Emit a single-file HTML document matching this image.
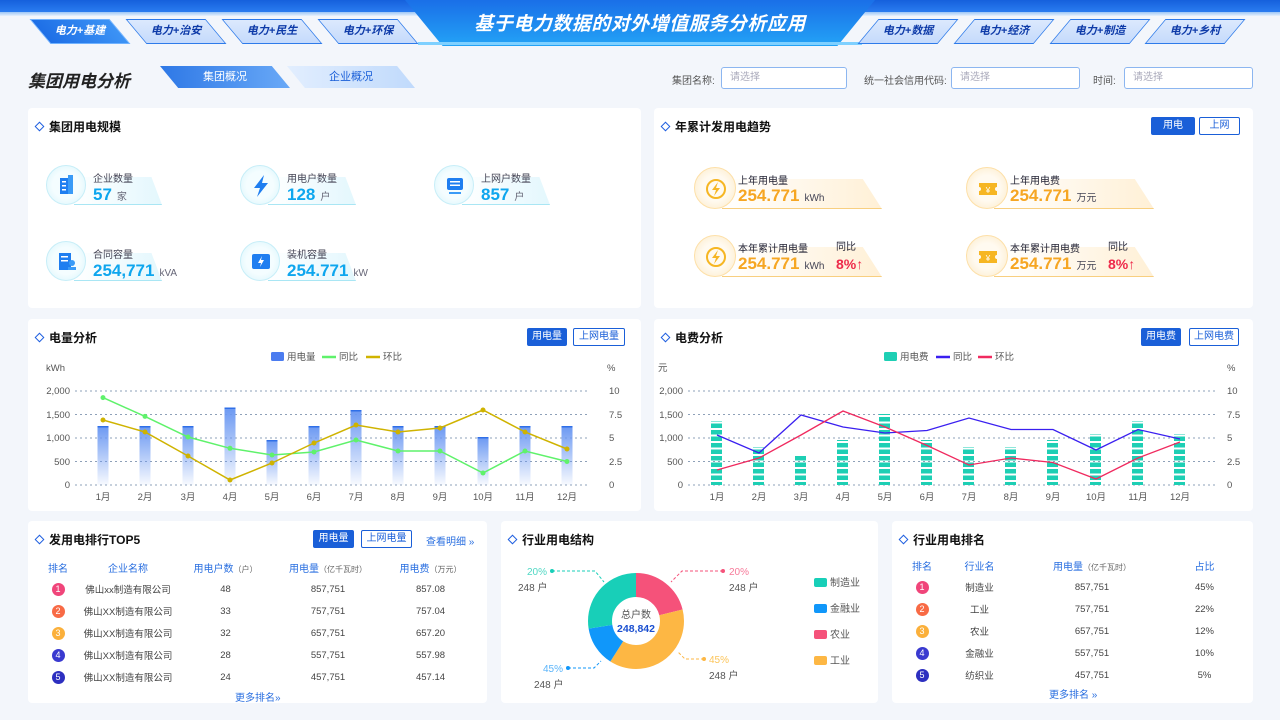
<!DOCTYPE html>
<html><head><meta charset="utf-8"><style>
*{margin:0;padding:0;box-sizing:border-box}
body{width:1280px;height:720px;overflow:hidden;background:#f3f6fb;font-family:"Liberation Sans","Noto Sans CJK SC",sans-serif;position:relative;color:#333}
.a{position:absolute}
.panel{position:absolute;background:#fff;border-radius:4px}
.ph{position:absolute;left:8px;top:10px;font-size:12px;font-weight:bold;color:#111;display:flex;align-items:center;white-space:nowrap}
.ph i{display:inline-block;width:7px;height:7px;border:1.6px solid #1f5fe0;transform:rotate(45deg);margin-right:6px}
.tab{position:absolute;top:19px;height:25px;width:80px;line-height:25px;text-align:center;font-size:11px;font-weight:bold;font-style:italic;color:#0d3aa8}
.tab b{position:absolute;inset:0;transform:skewX(40deg);background:linear-gradient(#dce9fd,#c5dafc);border:1.5px solid #2e7bea;z-index:0}
.tab.rt b{transform:skewX(-40deg)}
.tab span{position:relative}
.tab.on{color:#fff}.tab.on b{background:linear-gradient(90deg,#1e6fe6,#3c93f5);border-color:#6fb2ff}
.btn{position:absolute;height:18px;font-size:10px;line-height:16px;text-align:center;border:1px solid #1a5fd8;border-radius:2px;color:#1a5fd8;background:#fff}
.btn.on{background:#1a5fd8;color:#fff}
.lbl{font-size:11px;color:#555;white-space:nowrap}
.inp{position:absolute;top:67px;height:22px;border:1px solid #8cb6f0;border-radius:3px;font-size:10px;color:#aab;line-height:20px;padding-left:8px;background:#fff}
.st,.so{width:200px;height:44px;white-space:nowrap}
.st .c{position:absolute;left:0;top:0;width:40px;height:40px;border-radius:50%;background:radial-gradient(#f4fdff 50%,#d6f4fb);border:1px solid #c7eef8}
.st .r{position:absolute;left:28px;top:12px;width:88px;height:28px;background:linear-gradient(90deg,rgba(210,244,252,0) ,#e3f7fd);clip-path:polygon(0 0,88% 0,100% 100%,0 100%);border-bottom:1px solid #a9e6f4}
.st .t{position:absolute;left:47px;top:5px;font-size:10px;color:#445}
.st .v{position:absolute;left:47px;top:20px;font-size:17px;font-weight:bold;color:#0ea6ee}
.st .v small{font-size:10px;color:#667;font-weight:normal;margin-left:5px}
.so .c{position:absolute;left:0;top:0;width:42px;height:42px;border-radius:50%;background:radial-gradient(#fffaf0 45%,#fde9c4);border:1px solid #fde0a8}
.so .r{position:absolute;left:28px;top:12px;width:160px;height:30px;background:linear-gradient(90deg,rgba(255,244,224,0),#fff0d6);clip-path:polygon(0 0,88% 0,100% 100%,0 100%);border-bottom:1px solid #f8cf80}
.so .t{position:absolute;left:44px;top:5px;font-size:10px;color:#223}
.so .v{position:absolute;left:44px;top:19px;font-size:17px;font-weight:bold;color:#f6a623}
.so .v small{font-size:10px;color:#445;font-weight:normal;margin-left:5px}
.so .p{position:absolute;left:142px;font-size:10px;color:#223}
.so .pv{position:absolute;left:116px;top:21px;font-size:14px;font-weight:bold;color:#ee2a4a}
table{position:absolute;border-collapse:collapse;font-size:9.5px;color:#444}
td,th{text-align:center;height:22px;font-weight:normal;white-space:nowrap}
th{color:#2a6fe0;font-size:10px}
th small{color:#666;font-size:8px}
.n{display:inline-block;width:13px;height:13px;border-radius:50%;color:#fff;font-size:9px;line-height:13px}
</style></head><body>
<!-- header -->
<div class="a" style="left:0;top:0;width:1280px;height:12px;background:linear-gradient(#1560dc,#2a7cf0)"></div>
<div class="a" style="left:0;top:12px;width:1280px;height:4px;background:linear-gradient(#9cc6f6,#e8f1fd)"></div>
<div class="a" style="left:405px;top:0;width:470px;height:46px;background:linear-gradient(#1a6fe8,#23a3f6);clip-path:polygon(0 0,100% 0,92% 100%,8% 100%)"></div>
<div class="a" style="left:418px;top:42px;width:444px;height:3px;background:#7ed0ff"></div>
<div class="a" style="left:405px;top:9px;width:470px;text-align:center;font-size:19px;font-weight:bold;font-style:italic;color:#fff;letter-spacing:0.5px">基于电力数据的对外增值服务分析应用</div>
<div class="tab on" style="left:40px"><b></b><span>电力+基建</span></div>
<div class="tab" style="left:136px"><b></b><span>电力+治安</span></div>
<div class="tab" style="left:232px"><b></b><span>电力+民生</span></div>
<div class="tab" style="left:328px"><b></b><span>电力+环保</span></div>
<div class="tab rt" style="left:868px"><b></b><span>电力+数据</span></div>
<div class="tab rt" style="left:964px"><b></b><span>电力+经济</span></div>
<div class="tab rt" style="left:1060px"><b></b><span>电力+制造</span></div>
<div class="tab rt" style="left:1155px"><b></b><span>电力+乡村</span></div>
<!-- title row -->
<div class="a" style="left:28px;top:67px;font-size:17px;font-weight:bold;font-style:italic;color:#222">集团用电分析</div>
<div class="a" style="left:160px;top:66px;width:130px;height:22px;background:linear-gradient(90deg,#2e78e6,#69a9f7);clip-path:polygon(0 0,86% 0,100% 100%,14% 100%);color:#fff;font-size:11px;text-align:center;line-height:22px">集团概况</div>
<div class="a" style="left:287px;top:66px;width:128px;height:22px;background:linear-gradient(90deg,#e2eefe,#c0dafc);clip-path:polygon(0 0,86% 0,100% 100%,14% 100%);color:#1a5fd8;font-size:11px;text-align:center;line-height:22px">企业概况</div>
<div class="a lbl" style="left:672px;top:72px;font-size:10px">集团名称:</div><div class="inp" style="left:721px;width:126px">请选择</div>
<div class="a lbl" style="left:864px;top:72px;font-size:10px">统一社会信用代码:</div><div class="inp" style="left:951px;width:129px">请选择</div>
<div class="a lbl" style="left:1093px;top:72px;font-size:10px">时间:</div><div class="inp" style="left:1124px;width:129px">请选择</div>

<!-- panel 1 -->
<div class="panel" style="left:28px;top:108px;width:613px;height:200px">
<div class="ph"><i></i>集团用电规模</div>
<div class="a st" style="left:18px;top:57px"><div class="r"></div><div class="c"><svg width="40" height="40"><rect x="13" y="12" width="8" height="16" fill="#1f7ef0"/><rect x="21" y="9" width="5" height="19" fill="#3a9bf7"/><rect x="15" y="15" width="4" height="1.5" fill="#fff"/><rect x="15" y="19" width="4" height="1.5" fill="#fff"/><rect x="15" y="23" width="4" height="1.5" fill="#fff"/></svg></div><div class="t">企业数量</div><div class="v">57<small>家</small></div></div>
<div class="a st" style="left:212px;top:57px"><div class="r"></div><div class="c"><svg width="40" height="40"><path d="M23 9 L13 22 H19 L16 31 L27 17 H21 Z" fill="#1f7ef0"/></svg></div><div class="t">用电户数量</div><div class="v">128<small>户</small></div></div>
<div class="a st" style="left:406px;top:57px"><div class="r"></div><div class="c"><svg width="40" height="40"><rect x="12" y="12" width="16" height="12" rx="2" fill="#1f7ef0"/><rect x="15" y="15" width="10" height="1.5" fill="#fff"/><rect x="15" y="18.5" width="10" height="1.5" fill="#fff"/><rect x="14" y="26" width="12" height="2" fill="#3a9bf7"/></svg></div><div class="t">上网户数量</div><div class="v">857<small>户</small></div></div>
<div class="a st" style="left:18px;top:133px"><div class="r"></div><div class="c"><svg width="40" height="40"><rect x="12" y="11" width="12" height="17" fill="#1f7ef0"/><rect x="14" y="14" width="7" height="1.5" fill="#fff"/><rect x="14" y="18" width="7" height="1.5" fill="#fff"/><circle cx="25" cy="21" r="3" fill="#3a9bf7"/><rect x="21" y="25" width="8" height="3" fill="#3a9bf7"/></svg></div><div class="t">合同容量</div><div class="v">254,771<small>kVA</small></div></div>
<div class="a st" style="left:212px;top:133px"><div class="r"></div><div class="c"><svg width="40" height="40"><rect x="11" y="12" width="18" height="15" rx="2" fill="#1f7ef0"/><path d="M21 14 L17 21 H20 L19 25 L23 18 H20 Z" fill="#fff"/></svg></div><div class="t">装机容量</div><div class="v">254.771<small>kW</small></div></div>
</div>

<!-- panel 2 -->
<div class="panel" style="left:654px;top:108px;width:599px;height:200px">
<div class="ph"><i></i>年累计发用电趋势</div>
<div class="btn on" style="left:497px;top:9px;width:44px">用电</div><div class="btn" style="left:545px;top:9px;width:41px">上网</div>
<div class="a so" style="left:40px;top:59px"><div class="r"></div><div class="c"><svg width="42" height="42"><circle cx="21" cy="21" r="9" fill="none" stroke="#f6b623" stroke-width="2"/><path d="M23 14 L17 22 H21 L19 28 L25 20 H21 Z" fill="#f6b623"/></svg></div><div class="t">上年用电量</div><div class="v">254.771<small>kWh</small></div></div>
<div class="a so" style="left:312px;top:59px"><div class="r"></div><div class="c"><svg width="42" height="42"><path d="M12 15 H30 V19 A2 2 0 0 0 30 23 V27 H12 V23 A2 2 0 0 0 12 19 Z" fill="#f6b623"/><text x="21" y="25" font-size="8" fill="#fff" text-anchor="middle">¥</text></svg></div><div class="t">上年用电费</div><div class="v">254.771<small>万元</small></div></div>
<div class="a so" style="left:40px;top:127px"><div class="r"></div><div class="c"><svg width="42" height="42"><circle cx="21" cy="21" r="9" fill="none" stroke="#f6b623" stroke-width="2"/><path d="M23 14 L17 22 H21 L19 28 L25 20 H21 Z" fill="#f6b623"/></svg></div><div class="t">本年累计用电量</div><div class="v">254.771<small>kWh</small></div><div class="p" style="top:3px">同比</div><div class="pv" style="left:142px">8%↑</div></div>
<div class="a so" style="left:312px;top:127px"><div class="r"></div><div class="c"><svg width="42" height="42"><path d="M12 15 H30 V19 A2 2 0 0 0 30 23 V27 H12 V23 A2 2 0 0 0 12 19 Z" fill="#f6b623"/><text x="21" y="25" font-size="8" fill="#fff" text-anchor="middle">¥</text></svg></div><div class="t">本年累计用电费</div><div class="v">254.771<small>万元</small></div><div class="p" style="top:3px">同比</div><div class="pv" style="left:142px">8%↑</div></div>
</div>

<!-- panel 3 -->
<div class="panel" style="left:28px;top:319px;width:613px;height:192px">
<div class="ph"><i></i>电量分析</div>
<div class="btn on" style="left:499px;top:9px;width:40px">用电量</div><div class="btn" style="left:545px;top:9px;width:52px">上网电量</div>
</div>
<svg class="a" style="left:0;top:0" width="1280" height="720" font-family="Liberation Sans,Noto Sans CJK SC,sans-serif" font-size="9.5" fill="#555">
<defs>
<linearGradient id="bg1" x1="0" y1="0" x2="0" y2="1"><stop offset="0" stop-color="#6b98f2"/><stop offset="1" stop-color="#6b98f2" stop-opacity="0.05"/></linearGradient>
<pattern id="st" width="12" height="6.5" patternUnits="userSpaceOnUse" y="1"><rect width="12" height="4.5" fill="#1ecfb4"/></pattern>
</defs>
<rect x="271" y="352" width="13" height="9" rx="1.5" fill="#4b7cf0"/><text x="287" y="360">用电量</text>
<line x1="322" y1="357" x2="336" y2="357" stroke="#5ff26b" stroke-width="2.5"/><text x="339" y="360">同比</text>
<line x1="366" y1="357" x2="380" y2="357" stroke="#d0b400" stroke-width="2.5"/><text x="383" y="360">环比</text>
<text x="46" y="371">kWh</text><text x="607" y="371">%</text>
<g stroke="#8ea0b8" stroke-dasharray="2 3" stroke-width="1"><line x1="75" y1="391" x2="590" y2="391"/><line x1="75" y1="414.5" x2="590" y2="414.5"/><line x1="75" y1="438" x2="590" y2="438"/><line x1="75" y1="461.5" x2="590" y2="461.5"/><line x1="75" y1="485" x2="590" y2="485"/></g>
<g text-anchor="end"><text x="70" y="394">2,000</text><text x="70" y="418">1,500</text><text x="70" y="441">1,000</text><text x="70" y="465">500</text><text x="70" y="488">0</text></g>
<g><text x="609" y="394">10</text><text x="609" y="418">7.5</text><text x="609" y="441">5</text><text x="609" y="465">2.5</text><text x="609" y="488">0</text></g>
<g fill="url(#bg1)"><rect x="97.5" y="426" width="11" height="59"/><rect x="139.5" y="426" width="11" height="59"/><rect x="182.5" y="426" width="11" height="59"/><rect x="224.5" y="407.5" width="11" height="77.5"/><rect x="266.5" y="440" width="11" height="45"/><rect x="308.5" y="426" width="11" height="59"/><rect x="350.5" y="410" width="11" height="75"/><rect x="392.5" y="426" width="11" height="59"/><rect x="434.5" y="426" width="11" height="59"/><rect x="477.5" y="437" width="11" height="48"/><rect x="519.5" y="426" width="11" height="59"/><rect x="561.5" y="426" width="11" height="59"/></g>
<g fill="#2f6fe8"><rect x="97.5" y="426" width="11" height="1.5"/><rect x="139.5" y="426" width="11" height="1.5"/><rect x="182.5" y="426" width="11" height="1.5"/><rect x="224.5" y="407.5" width="11" height="1.5"/><rect x="266.5" y="440" width="11" height="1.5"/><rect x="308.5" y="426" width="11" height="1.5"/><rect x="350.5" y="410" width="11" height="1.5"/><rect x="392.5" y="426" width="11" height="1.5"/><rect x="434.5" y="426" width="11" height="1.5"/><rect x="477.5" y="437" width="11" height="1.5"/><rect x="519.5" y="426" width="11" height="1.5"/><rect x="561.5" y="426" width="11" height="1.5"/></g>
<polyline fill="none" stroke="#5ff26b" stroke-width="1.5" points="103,397.6 145,416.4 188,437 230,448.3 272,455 314,452 356,440 398,451 440,451 483,473 525,451 567,461.5"/>
<g fill="#5ff26b"><circle cx="103" cy="397.6" r="2.5"/><circle cx="145" cy="416.4" r="2.5"/><circle cx="188" cy="437" r="2.5"/><circle cx="230" cy="448.3" r="2.5"/><circle cx="272" cy="455" r="2.5"/><circle cx="314" cy="452" r="2.5"/><circle cx="356" cy="440" r="2.5"/><circle cx="398" cy="451" r="2.5"/><circle cx="440" cy="451" r="2.5"/><circle cx="483" cy="473" r="2.5"/><circle cx="525" cy="451" r="2.5"/><circle cx="567" cy="461.5" r="2.5"/></g>
<polyline fill="none" stroke="#cfb300" stroke-width="1.5" points="103,420 145,432 188,456 230,480 272,463 314,443 356,425 398,432 440,428 483,410 525,432 567,449"/>
<g fill="#cfb300"><circle cx="103" cy="420" r="2.5"/><circle cx="145" cy="432" r="2.5"/><circle cx="188" cy="456" r="2.5"/><circle cx="230" cy="480" r="2.5"/><circle cx="272" cy="463" r="2.5"/><circle cx="314" cy="443" r="2.5"/><circle cx="356" cy="425" r="2.5"/><circle cx="398" cy="432" r="2.5"/><circle cx="440" cy="428" r="2.5"/><circle cx="483" cy="410" r="2.5"/><circle cx="525" cy="432" r="2.5"/><circle cx="567" cy="449" r="2.5"/></g>
<g text-anchor="middle"><text x="103" y="500">1月</text><text x="145" y="500">2月</text><text x="188" y="500">3月</text><text x="230" y="500">4月</text><text x="272" y="500">5月</text><text x="314" y="500">6月</text><text x="356" y="500">7月</text><text x="398" y="500">8月</text><text x="440" y="500">9月</text><text x="483" y="500">10月</text><text x="525" y="500">11月</text><text x="567" y="500">12月</text></g>
</svg>

<!-- panel 4 -->
<div class="panel" style="left:654px;top:319px;width:599px;height:192px">
<div class="ph"><i></i>电费分析</div>
<div class="btn on" style="left:487px;top:9px;width:40px">用电费</div><div class="btn" style="left:535px;top:9px;width:50px">上网电费</div>
</div>
<svg class="a" style="left:0;top:0" width="1280" height="720" font-family="Liberation Sans,Noto Sans CJK SC,sans-serif" font-size="9.5" fill="#555">
<rect x="884" y="352" width="13" height="9" rx="1.5" fill="#1ecfb4"/><text x="900" y="360">用电费</text>
<line x1="936" y1="357" x2="950" y2="357" stroke="#3a1ff0" stroke-width="2.5"/><text x="953" y="360">同比</text>
<line x1="978" y1="357" x2="992" y2="357" stroke="#f02a5f" stroke-width="2.5"/><text x="995" y="360">环比</text>
<text x="658" y="371">元</text><text x="1227" y="371">%</text>
<g stroke="#8ea0b8" stroke-dasharray="2 3" stroke-width="1"><line x1="688" y1="391" x2="1215" y2="391"/><line x1="688" y1="414.5" x2="1215" y2="414.5"/><line x1="688" y1="438" x2="1215" y2="438"/><line x1="688" y1="461.5" x2="1215" y2="461.5"/><line x1="688" y1="485" x2="1215" y2="485"/></g>
<g text-anchor="end"><text x="683" y="394">2,000</text><text x="683" y="418">1,500</text><text x="683" y="441">1,000</text><text x="683" y="465">500</text><text x="683" y="488">0</text></g>
<g><text x="1227" y="394">10</text><text x="1227" y="418">7.5</text><text x="1227" y="441">5</text><text x="1227" y="465">2.5</text><text x="1227" y="488">0</text></g>
<g fill="url(#st)"><rect x="711" y="421" width="11" height="64"/><rect x="753" y="447" width="11" height="38"/><rect x="795" y="454" width="11" height="31"/><rect x="837" y="440" width="11" height="45"/><rect x="879" y="414" width="11" height="71"/><rect x="921" y="440" width="11" height="45"/><rect x="963" y="447" width="11" height="38"/><rect x="1005" y="447" width="11" height="38"/><rect x="1047" y="440" width="11" height="45"/><rect x="1090" y="434" width="11" height="51"/><rect x="1132" y="421" width="11" height="64"/><rect x="1174" y="434" width="11" height="51"/></g>
<polyline fill="none" stroke="#3a1ff0" stroke-width="1.3" points="717,435 759,453 801,415 843,427 885,433 927,430.5 969,418 1011,429.5 1053,429.5 1096,450 1138,429.5 1180,439"/>
<polyline fill="none" stroke="#f02a5f" stroke-width="1.3" points="717,470 759,458 801,435 843,411 885,427 927,445.5 969,465 1011,458 1053,462.5 1096,479 1138,458 1180,442"/>
<g text-anchor="middle"><text x="717" y="500">1月</text><text x="759" y="500">2月</text><text x="801" y="500">3月</text><text x="843" y="500">4月</text><text x="885" y="500">5月</text><text x="927" y="500">6月</text><text x="969" y="500">7月</text><text x="1011" y="500">8月</text><text x="1053" y="500">9月</text><text x="1096" y="500">10月</text><text x="1138" y="500">11月</text><text x="1180" y="500">12月</text></g>
</svg>

<!-- bottom 1 -->
<div class="panel" style="left:28px;top:521px;width:459px;height:182px">
<div class="ph"><i></i>发用电排行TOP5</div>
<div class="btn on" style="left:285px;top:9px;width:41px">用电量</div><div class="btn" style="left:333px;top:9px;width:51px">上网电量</div>
<div class="a" style="left:398px;top:12px;font-size:10px;color:#2a6fe0">查看明细 »</div>
<table style="left:10px;top:35px;width:440px">
<tr><th style="width:40px">排名</th><th style="width:100px">企业名称</th><th style="width:95px">用电户数<small>（户）</small></th><th style="width:110px">用电量<small>（亿千瓦时）</small></th><th>用电费<small>（万元）</small></th></tr>
<tr><td><span class="n" style="background:#f0457a">1</span></td><td>佛山xx制造有限公司</td><td>48</td><td>857,751</td><td>857.08</td></tr>
<tr><td><span class="n" style="background:#f86a45">2</span></td><td>佛山XX制造有限公司</td><td>33</td><td>757,751</td><td>757.04</td></tr>
<tr><td><span class="n" style="background:#fbb03b">3</span></td><td>佛山XX制造有限公司</td><td>32</td><td>657,751</td><td>657.20</td></tr>
<tr><td><span class="n" style="background:#3a3ad0">4</span></td><td>佛山XX制造有限公司</td><td>28</td><td>557,751</td><td>557.98</td></tr>
<tr><td><span class="n" style="background:#2d2fc0">5</span></td><td>佛山XX制造有限公司</td><td>24</td><td>457,751</td><td>457.14</td></tr>
</table>
<div class="a" style="left:207px;top:168px;font-size:10px;color:#2a6fe0">更多排名»</div>
</div>

<!-- bottom 2 -->
<div class="panel" style="left:501px;top:521px;width:377px;height:182px">
<div class="ph"><i></i>行业用电结构</div>
</div>
<svg class="a" style="left:0;top:0" width="1280" height="720" font-family="Liberation Sans,Noto Sans CJK SC,sans-serif" font-size="10" fill="#555">
<g transform="translate(636,621) rotate(-90)" fill="none" stroke-width="24">
<circle r="36" stroke="#f5527a" stroke-dasharray="47.7 300"/>
<circle r="36" stroke="#fdb744" stroke-dasharray="0 47.7 85.5 300"/>
<circle r="36" stroke="#1097fa" stroke-dasharray="0 133.2 30.4 300"/>
<circle r="36" stroke="#18cfb8" stroke-dasharray="0 163.6 62.6 300"/>
</g>
<text x="636" y="618" text-anchor="middle" fill="#555">总户数</text>
<text x="636" y="632" text-anchor="middle" fill="#1a4fd0" font-weight="bold" font-size="10.5">248,842</text>
<polyline points="552,571 595,571 604,582" fill="none" stroke="#18cfb8" stroke-dasharray="3 2"/><circle cx="552" cy="571" r="2" fill="#18cfb8"/>
<text x="527" y="575" fill="#4fd8c4">20%</text><text x="518" y="591">248 户</text>
<polyline points="723,571 682,571 671,582" fill="none" stroke="#f5527a" stroke-dasharray="3 2"/><circle cx="723" cy="571" r="2" fill="#f5527a"/>
<text x="729" y="575" fill="#f77a9a">20%</text><text x="729" y="591">248 户</text>
<polyline points="704,659 685,659 678,652" fill="none" stroke="#fdb744" stroke-dasharray="3 2"/><circle cx="704" cy="659" r="2" fill="#fdb744"/>
<text x="709" y="663" fill="#fcc55a">45%</text><text x="709" y="679">248 户</text>
<polyline points="568,668 594,668 601,661" fill="none" stroke="#1097fa" stroke-dasharray="3 2"/><circle cx="568" cy="668" r="2" fill="#1097fa"/>
<text x="543" y="672" fill="#5ab4fa">45%</text><text x="534" y="688">248 户</text>
<rect x="814" y="578" width="13" height="9" rx="2" fill="#18cfb8"/><text x="830" y="586">制造业</text>
<rect x="814" y="604" width="13" height="9" rx="2" fill="#1097fa"/><text x="830" y="612">金融业</text>
<rect x="814" y="630" width="13" height="9" rx="2" fill="#f5527a"/><text x="830" y="638">农业</text>
<rect x="814" y="656" width="13" height="9" rx="2" fill="#fdb744"/><text x="830" y="664">工业</text>
</svg>

<!-- bottom 3 -->
<div class="panel" style="left:892px;top:521px;width:361px;height:182px">
<div class="ph"><i></i>行业用电排名</div>
<table style="left:10px;top:33px;width:340px">
<tr><th style="width:40px">排名</th><th style="width:75px">行业名</th><th style="width:150px">用电量<small>（亿千瓦时）</small></th><th>占比</th></tr>
<tr><td><span class="n" style="background:#f0457a">1</span></td><td>制造业</td><td>857,751</td><td>45%</td></tr>
<tr><td><span class="n" style="background:#f86a45">2</span></td><td>工业</td><td>757,751</td><td>22%</td></tr>
<tr><td><span class="n" style="background:#fbb03b">3</span></td><td>农业</td><td>657,751</td><td>12%</td></tr>
<tr><td><span class="n" style="background:#3a3ad0">4</span></td><td>金融业</td><td>557,751</td><td>10%</td></tr>
<tr><td><span class="n" style="background:#2d2fc0">5</span></td><td>纺织业</td><td>457,751</td><td>5%</td></tr>
</table>
<div class="a" style="left:157px;top:165px;font-size:10px;color:#2a6fe0">更多排名 »</div>
</div>
</body></html>
